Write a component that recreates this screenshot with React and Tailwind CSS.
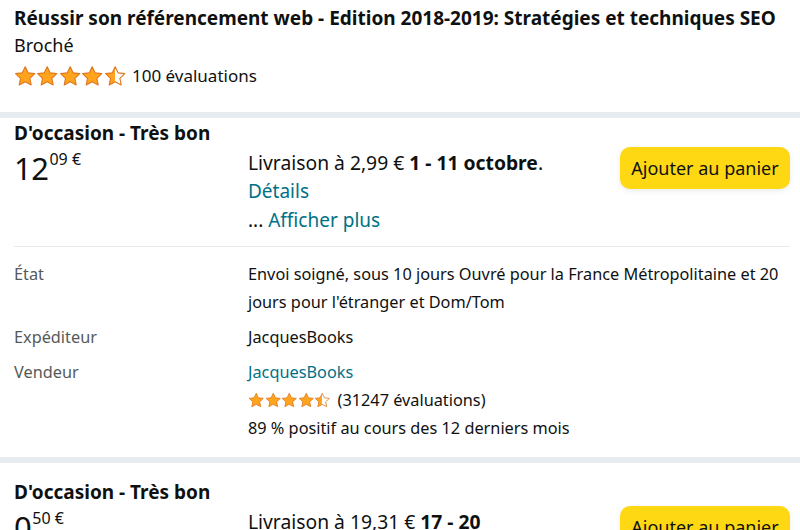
import { Fragment } from 'react';

const Star = ({ size, fill }) => {
  const id = `half-${size}`;
  return (
    <svg width={size} height={size} viewBox="0 0 24 24" className="shrink-0">
      <defs>
        <linearGradient id={id} x1="0" x2="1" y1="0" y2="0">
          <stop offset="50%" stopColor="#ffa41c" />
          <stop offset="50%" stopColor="#ffffff" />
        </linearGradient>
      </defs>
      <path
        d="M12 1.8l3.1 6.6 7.2.9-5.3 5 1.4 7.1L12 17.9l-6.4 3.5L7 14.3l-5.3-5 7.2-.9z"
        fill={fill === 'half' ? `url(#${id})` : '#ffa41c'}
        stroke="#de7921"
        strokeWidth="1.2"
        strokeLinejoin="round"
      />
    </svg>
  );
};

const Stars = ({ size }) => (
  <div className="flex items-center">
    {[0, 1, 2, 3].map((i) => (
      <Star key={i} size={size} fill="full" />
    ))}
    <Star size={size} fill="half" />
  </div>
);

const Band = () => <div className="h-[6px] bg-[#e7ecf0]" />;

const Offer = ({ whole, cents, shipping, dates, details }) => (
  <div className="pl-[14px] pr-[10px] pt-[3px]">
    <div className="text-[19px] font-bold leading-[24px]">D'occasion - Très bon</div>
    <div className="flex">
      <div className="w-[234px] flex items-start pt-[3px]">
        <span className="text-[31px] leading-[40px] tracking-[-0.5px]">{whole}</span>
        <span className="text-[16px] leading-[22px] ml-[1px]">{cents} €</span>
      </div>
      <div className="flex-1 pt-[3px]">
        <div className="text-[19.3px] leading-[29px]">
          Livraison à {shipping} <span className="font-bold">{dates}</span>
          {details && '.'}
        </div>
        {details && (
          <>
            <div className="text-[19px] leading-[29px] text-[#007185]">Détails</div>
            <div className="text-[19px] leading-[29px]">
              ... <span className="text-[#007185]">Afficher plus</span>
            </div>
          </>
        )}
      </div>
      <div className="pt-[2px]">
        <button className="h-[42px] w-[170px] rounded-[10px] bg-[#ffd814] text-[18px] text-[#0f1111] shadow-[0_2px_5px_rgba(213,217,217,0.5)]">
          Ajouter au panier
        </button>
      </div>
    </div>
  </div>
);

const rows = [
  {
    label: 'État',
    value: (
      <>
        Envoi soigné, sous 10 jours Ouvré pour la France Métropolitaine et 20
        <br />
        jours pour l'étranger et Dom/Tom
      </>
    ),
  },
  { label: 'Expéditeur', value: 'JacquesBooks' },
  {
    label: 'Vendeur',
    value: (
      <>
        <div className="text-[#007185]">JacquesBooks</div>
        <div className="flex items-center gap-[7px]">
          <Stars size={16.5} />
          <span>(31247 évaluations)</span>
        </div>
        <div>89 % positif au cours des 12 derniers mois</div>
      </>
    ),
  },
];

export default function App() {
  return (
    <div className="w-[800px] h-[530px] overflow-hidden bg-white text-[#0f1111] font-['Noto_Sans',sans-serif]">
      <div className="pl-[14px] pr-[10px] pt-[5px] pb-[22px]">
        <h1 className="text-[19px] font-bold leading-[26px] whitespace-nowrap">
          Réussir son référencement web - Edition 2018-2019: Stratégies et techniques SEO
        </h1>
        <div className="text-[18px] leading-[28px]">Broché</div>
        <div className="flex items-center gap-[6px] mt-[3px] h-[28px]">
          <Stars size={22.4} />
          <span className="text-[17px]">100 évaluations</span>
        </div>
      </div>
      <Band />
      <Offer whole="12" cents="09" shipping="2,99 €" dates="1 - 11 octobre" details />
      <div className="pl-[14px] pr-[10px]">
        <div className="mt-[11px] border-t border-[#eaeaea]" />
        <div className="grid grid-cols-[234px_1fr] gap-y-[7px] pt-[13px] pb-[15px] text-[16.3px] leading-[28px]">
          {rows.map((r) => (
            <Fragment key={r.label}>
              <div className="text-[#565959]">{r.label}</div>
              <div>{r.value}</div>
            </Fragment>
          ))}
        </div>
      </div>
      <Band />
      <div className="pt-[14px]">
        <Offer whole="0" cents="50" shipping="19,31 €" dates="17 - 20" />
      </div>
    </div>
  );
}
